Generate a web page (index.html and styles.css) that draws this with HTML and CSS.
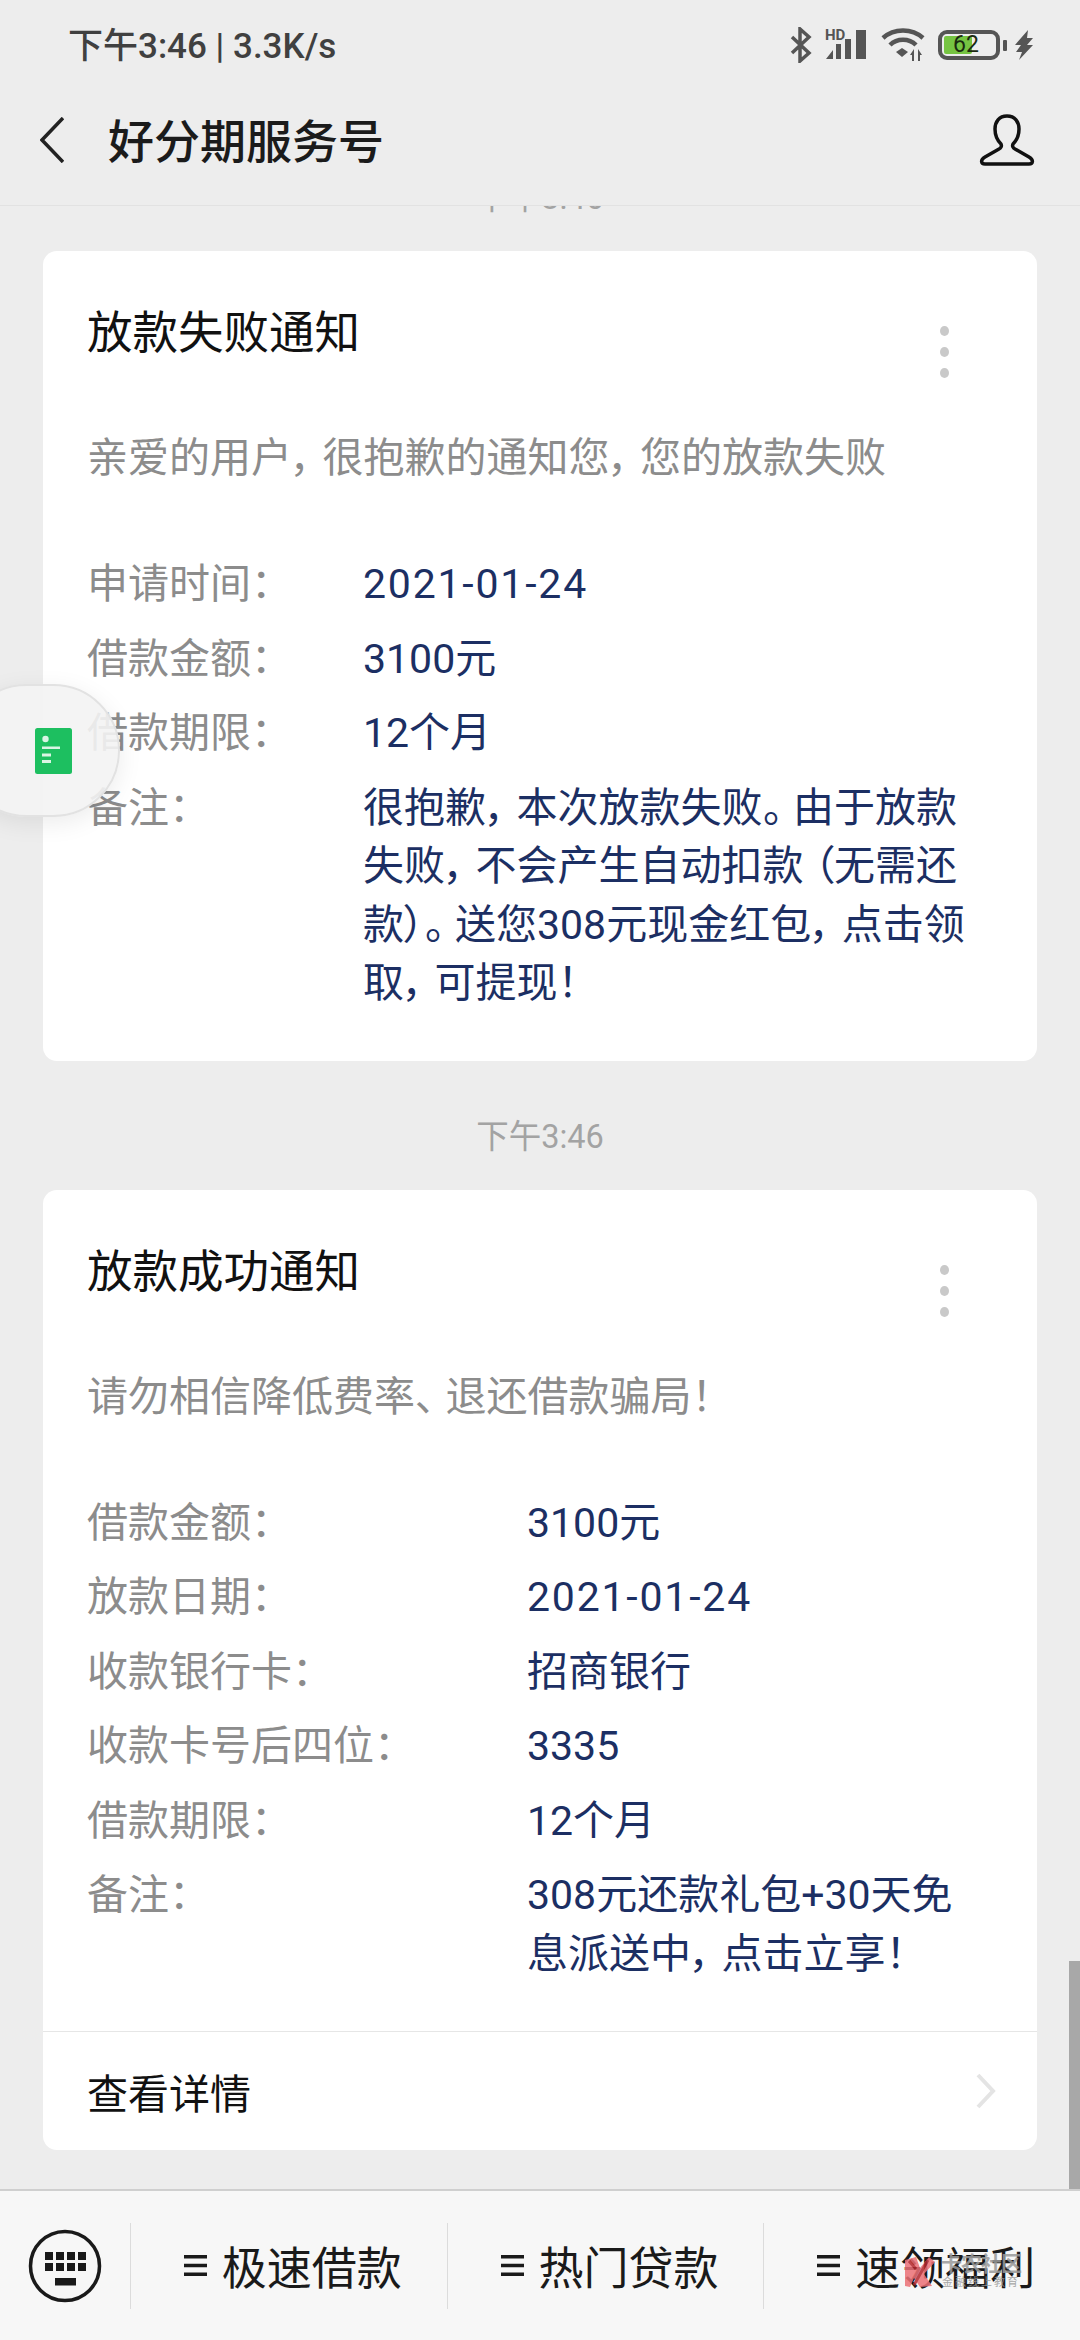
FILE: index.html
```html
<!DOCTYPE html>
<html lang="zh-CN">
<head>
    <meta charset="UTF-8">
    <meta name="viewport" content="width=device-width, initial-scale=1.0">
    <title>好分期服务号</title>
    <link rel="stylesheet" href="styles.css">
</head>
<body>
    <div class="app">
        <header class="top">
            <div class="status">
                <span class="status-text">下午3:46 | 3.3K/s</span>
                <div class="status-icons">
                    <svg class="ic-bt" width="24" height="36" viewBox="0 0 24 36"><polyline points="3,10 20,26 11,34 11,2 20,10 3,26"/></svg>
                    <svg class="ic-signal" width="42" height="32" viewBox="0 0 42 32">
                        <text x="0" y="11" class="hd">HD</text>
                        <path d="M1 30 L8 21 V30 Z M11 15 H16 V30 H11 Z M20 10 H26 V30 H20 Z M31 1 H41 V30 H31 Z"/>
                    </svg>
                    <svg class="ic-wifi" width="46" height="34" viewBox="0 0 46 34">
                        <path class="arc" d="M2 10 C13 0 31 0 42 10"/>
                        <path class="arc" d="M9 17 C16 10 28 10 35 17"/>
                        <path d="M15 24 L21 20 L27 24 L21 29 Z"/>
                        <path d="M33 21 V33 H31 V27 H29 Z M37 21 L41 27 H39 V33 H37 Z"/>
                    </svg>
                    <div class="battery">
                        <div class="battery-level"></div>
                        <span class="battery-num">62</span>
                    </div>
                    <div class="battery-tip"></div>
                    <svg class="ic-bolt" width="18" height="30" viewBox="0 0 18 30"><path d="M13 0 L0 15 L6 15 L1 22 L7 22 L4 30 L18 15 L12 15 L18 8 L12 8 Z"/></svg>
                </div>
            </div>
            <nav class="nav">
                <svg class="back" width="24" height="46" viewBox="0 0 24 46"><polyline points="23,1 2,23 23,45"/></svg>
                <h1 class="nav-title">好分期服务号</h1>
                <svg class="person" width="56" height="52" viewBox="0 0 56 52"><path d="M28 2 C20 2 16 8 16 15 C16 22 19 27 22 30 C23 32 22 34 20 35 L6 43 C1 46 2 50 6 50 L50 50 C54 50 55 46 50 43 L36 35 C34 34 33 32 34 30 C37 27 40 22 40 15 C40 8 36 2 28 2 Z"/></svg>
            </nav>
        </header>

        <main class="messages">
            <div class="stamp">下午3:46</div>
            <section class="card">
                <div class="card-body card-fail">
                    <div class="card-head">
                        <h2 class="card-title">放款失败通知</h2>
                        <div class="dots"><i></i><i></i><i></i></div>
                    </div>
                    <p class="card-desc">亲爱的用户<i class="pn">，</i>很抱歉的通知您<i class="pn">，</i>您的放款失败</p>
                    <dl class="rows">
                        <dt>申请时间：</dt><dd class="date">2021-01-24</dd>
                        <dt>借款金额：</dt><dd>3100元</dd>
                        <dt>借款期限：</dt><dd>12个月</dd>
                        <dt>备注：</dt><dd>很抱歉<i class="pn">，</i>本次放款失败<i class="pn">。</i>由于放款失败<i class="pn">，</i>不会产生自动扣款<i class="pn-open">（</i>无需还款）<i class="pn">。</i>送您308元现金红包<i class="pn">，</i>点击领取<i class="pn">，</i>可提现！</dd>
                    </dl>
                </div>
            </section>

            <div class="stamp stamp-gap">下午3:46</div>
            <section class="card">
                <div class="card-body card-ok">
                    <div class="card-head">
                        <h2 class="card-title">放款成功通知</h2>
                        <div class="dots"><i></i><i></i><i></i></div>
                    </div>
                    <p class="card-desc">请勿相信降低费率<i class="pn">、</i>退还借款骗局！</p>
                    <dl class="rows">
                        <dt>借款金额：</dt><dd>3100元</dd>
                        <dt>放款日期：</dt><dd class="date">2021-01-24</dd>
                        <dt>收款银行卡：</dt><dd>招商银行</dd>
                        <dt>收款卡号后四位：</dt><dd>3335</dd>
                        <dt>借款期限：</dt><dd>12个月</dd>
                        <dt>备注：</dt><dd>308元还款礼包+30天免息派送中<i class="pn">，</i>点击立享！</dd>
                    </dl>
                </div>
                <div class="card-foot">
                    <span>查看详情</span>
                    <svg class="chevron" width="20" height="36" viewBox="0 0 20 36"><polyline points="2,2 17,18 2,34"/></svg>
                </div>
            </section>
        </main>

        <footer class="bar">
            <div class="keyboard">
                <svg width="76" height="76" viewBox="0 0 76 76">
                    <circle cx="38" cy="38" r="34.5" class="ring"/>
                    <path d="M18 24 h8 v8 h-8 Z M29 24 h8 v8 h-8 Z M40 24 h8 v8 h-8 Z M51 24 h8 v8 h-8 Z M18 35 h8 v8 h-8 Z M29 35 h8 v8 h-8 Z M40 35 h8 v8 h-8 Z M51 35 h8 v8 h-8 Z M28 50 h21 v7.500 h-21 Z"/>
                </svg>
            </div>
            <div class="bar-item">
                <svg class="menu-ic" width="23" height="21" viewBox="0 0 23 21"><path d="M0 0 H23 V3.500 H0 Z M0 8.700 H23 V12.200 H0 Z M0 17.500 H23 V21 H0 Z"/></svg>
                <span>极速借款</span>
            </div>
            <div class="bar-item">
                <svg class="menu-ic" width="23" height="21" viewBox="0 0 23 21"><path d="M0 0 H23 V3.500 H0 Z M0 8.700 H23 V12.200 H0 Z M0 17.500 H23 V21 H0 Z"/></svg>
                <span>热门贷款</span>
            </div>
            <div class="bar-item">
                <svg class="menu-ic" width="23" height="21" viewBox="0 0 23 21"><path d="M0 0 H23 V3.500 H0 Z M0 8.700 H23 V12.200 H0 Z M0 17.500 H23 V21 H0 Z"/></svg>
                <span>速领福利</span>
            </div>
        </footer>

        <!-- floating bits over the chat -->
        <div class="scrollbar"></div>
        <div class="float-pill">
            <svg width="37" height="46" viewBox="0 0 37 46">
                <rect width="37" height="46" rx="2.500" fill="#1dbf60"/>
                <circle cx="10.500" cy="11" r="3.200" fill="#d9f5e4"/>
                <path d="M7 18.500 H25 V21 H7 Z M7 25.500 H16 V28.500 H7 Z M7 32 H16 V35 H7 Z" fill="#d9f5e4"/>
            </svg>
        </div>
        <div class="watermark">
            <svg width="32" height="34" viewBox="0 0 32 34">
                <path d="M1 6 L12 3 L16 14 L25 3 L31 8 L20 20 L28 32 L16 33 L10 24 L6 33 L1 32 Z" fill="#ec7076"/>
                <path d="M5 7 L12 15 M24 6 L10 31" stroke="#b3272d" stroke-width="3" fill="none"/>
            </svg>
            <div class="wm-text">
                <div class="wm-big">卡农社区</div>
                <div class="wm-small">金融线上教育</div>
            </div>
        </div>
    </div>
</body>
</html>
```

FILE: styles.css
```css
* {
    box-sizing: border-box;
}
body {
    margin: 0;
    background-color: #ededed;
    font-family: Roboto, "Noto Sans CJK SC", sans-serif;
    font-feature-settings: "palt";
}
.app {
    position: relative;
    display: flex;
    flex-direction: column;
    width: 1080px;
    height: 2340px;
    overflow: hidden;
}

/* top */
.top {
    flex-shrink: 0;
    height: 206px;
    border-bottom: 1px solid #e2e2e2;
    background-color: #ededed;
}
.status {
    display: flex;
    align-items: center;
    justify-content: space-between;
    height: 90px;
    padding: 0 47px 0 68px;
}
.status-text {
    margin-top: -5px;
    font-size: 35px;
    font-weight: 500;
    color: #404040;
}
.status-icons {
    display: flex;
    align-items: center;
}
.status-icons svg {
    display: block;
}
.ic-bt {
    margin-right: 12px;
}
.ic-bt polyline {
    fill: none;
    stroke: #555;
    stroke-width: 3.5;
}
.ic-signal {
    fill: #555;
    margin-right: 14px;
}
.hd {
    font-size: 15px;
    font-weight: 700;
}
.ic-wifi {
    fill: #555;
    margin-right: 11px;
}
.ic-wifi .arc {
    fill: none;
    stroke: #555;
    stroke-width: 4.500;
}
.battery {
    position: relative;
    display: flex;
    align-items: center;
    justify-content: center;
    width: 62px;
    height: 30px;
    border: 4px solid #555;
    border-radius: 9px;
}
.battery-level {
    position: absolute;
    left: 2px;
    top: 2px;
    bottom: 2px;
    width: 28px;
    border-radius: 2px;
    background-color: #76c442;
}
.battery-num {
    position: relative;
    font-size: 23px;
    line-height: 22px;
    color: #1a2a10;
    margin-right: 6px;
}
.battery-tip {
    width: 4px;
    height: 11px;
    margin: 0 8px 0 3px;
    border-radius: 1px;
    background-color: #555;
}
.ic-bolt {
    fill: #555;
}
.nav {
    display: flex;
    align-items: center;
    height: 115px;
    padding: 0 45px 16px 40px;
}
.back polyline {
    fill: none;
    stroke: #222;
    stroke-width: 3.5;
}
.nav-title {
    flex: 1;
    margin: 0 0 3px 44px;
    font-size: 46px;
    font-weight: 500;
    color: #1b1b1b;
}
.person path {
    fill: none;
    stroke: #111;
    stroke-width: 3.5;
}

/* chat, bottom aligned so the oldest stamp gets cut by the header */
.messages {
    flex: 1;
    display: flex;
    flex-direction: column;
    justify-content: flex-end;
    min-height: 0;
    overflow: hidden;
    padding: 0 43px 39px;
}
.stamp {
    flex-shrink: 0;
    height: 40px;
    margin-bottom: 33px;
    font-size: 32.500px;
    line-height: 40px;
    text-align: center;
    color: #a3a3a3;
}
.stamp-gap {
    margin-top: 56px;
}
.card {
    flex-shrink: 0;
    border-radius: 14px;
    background-color: #fff;
}
.card-body {
    padding: 53px 45px 48px 44px;
}
.card-head {
    display: flex;
    justify-content: space-between;
    height: 60px;
}
.card-title {
    margin: 0;
    font-size: 45.500px;
    font-weight: 400;
    line-height: 60px;
    color: #111;
}
.dots {
    display: flex;
    flex-direction: column;
    gap: 11px;
    margin: 22px 43px 0 0;
}
.dots i {
    flex-shrink: 0;
    width: 9px;
    height: 10px;
    border-radius: 50%;
    background-color: #c9c9c9;
}
.card-desc {
    margin: 65px 0 68px;
    font-size: 41px;
    line-height: 58px;
    color: #8c8c8c;
}
/* the phone font sets punctuation wider than palt does */
.pn {
    font-style: normal;
    margin-right: 10px;
}
.pn-open {
    font-style: normal;
    margin-left: 10px;
}
.rows {
    display: grid;
    row-gap: 16px;
    margin: 0;
    font-size: 41px;
    line-height: 58.500px;
}
.card-fail .rows {
    grid-template-columns: 276px 1fr;
}
.card-ok .rows {
    grid-template-columns: 440px 1fr;
}
.rows dt {
    color: #8c8c8c;
}
.rows dd {
    margin: 0;
    color: #1c2f63;
}
.rows .date {
    letter-spacing: 1.800px;
}
.card-foot {
    display: flex;
    align-items: center;
    justify-content: space-between;
    height: 119px;
    padding: 0 41px 0 44px;
    border-top: 1px solid #e6e6e6;
    font-size: 41px;
    color: #111;
}
.chevron polyline {
    fill: none;
    stroke: #e4e4e4;
    stroke-width: 4;
}

/* bottom menu */
.bar {
    flex-shrink: 0;
    display: flex;
    align-items: center;
    height: 151px;
    border-top: 2px solid #cfcfcf;
    background-color: #f7f7f7;
}
.keyboard {
    display: flex;
    justify-content: center;
    width: 130px;
    padding-right: 1px;
}
.keyboard svg {
    fill: #1a1a1a;
}
.ring {
    fill: none;
    stroke: #1a1a1a;
    stroke-width: 3.5;
}
.bar-item {
    flex: 1;
    display: flex;
    align-items: center;
    justify-content: center;
    gap: 15px;
    height: 86px;
    padding-left: 8px;
    border-left: 1px solid #dcdcdc;
    font-size: 45px;
    color: #1a1a1a;
}
.menu-ic {
    fill: #1a1a1a;
}

/* overlays */
.scrollbar {
    position: absolute;
    right: 0;
    top: 1961px;
    width: 11px;
    height: 228px;
    background-color: #a8a8a8;
}
.float-pill {
    position: absolute;
    left: -40px;
    top: 684px;
    display: flex;
    align-items: center;
    justify-content: flex-end;
    width: 160px;
    height: 133px;
    padding-right: 46px;
    border: 2px solid #e2e2e2;
    border-radius: 67px;
    background-color: rgba(243, 243, 243, 0.9);
    box-shadow: 0 6px 24px rgba(0, 0, 0, 0.08);
}
.watermark {
    position: absolute;
    left: 904px;
    top: 2254px;
    display: flex;
    gap: 5px;
    opacity: 0.85;
}
.wm-text {
    color: #9a9a9a;
    text-align: center;
}
.wm-big {
    font-size: 21px;
    font-weight: 700;
    line-height: 20px;
    letter-spacing: -1px;
}
.wm-small {
    font-size: 11px;
    line-height: 14px;
    margin-top: 2px;
    letter-spacing: 2px;
}
```
